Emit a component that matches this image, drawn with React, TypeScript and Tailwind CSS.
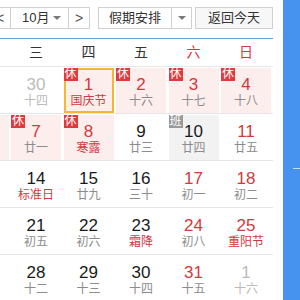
import React from "react";

type Day = {
  d: number;
  l: string;
  other?: boolean;
  red?: boolean;
  lred?: boolean;
  rest?: boolean;
  work?: boolean;
  sel?: boolean;
};

const weeks: Day[][] = [
  [
    { d: 28, l: "十二", other: true },
    { d: 29, l: "十三", other: true },
    { d: 30, l: "十四", other: true },
    { d: 1, l: "国庆节", red: true, lred: true, rest: true, sel: true },
    { d: 2, l: "十六", red: true, rest: true },
    { d: 3, l: "十七", red: true, rest: true },
    { d: 4, l: "十八", red: true, rest: true },
  ],
  [
    { d: 5, l: "十九", red: true, rest: true },
    { d: 6, l: "二十", red: true, rest: true },
    { d: 7, l: "廿一", red: true, rest: true },
    { d: 8, l: "寒露", red: true, lred: true, rest: true },
    { d: 9, l: "廿三" },
    { d: 10, l: "廿四", work: true },
    { d: 11, l: "廿五", red: true },
  ],
  [
    { d: 12, l: "廿六" },
    { d: 13, l: "廿七" },
    { d: 14, l: "标准日", lred: true },
    { d: 15, l: "廿九" },
    { d: 16, l: "三十" },
    { d: 17, l: "初一", red: true },
    { d: 18, l: "初二", red: true },
  ],
  [
    { d: 19, l: "初三" },
    { d: 20, l: "初四" },
    { d: 21, l: "初五" },
    { d: 22, l: "初六" },
    { d: 23, l: "霜降", lred: true },
    { d: 24, l: "初八", red: true },
    { d: 25, l: "重阳节", red: true, lred: true },
  ],
  [
    { d: 26, l: "初十" },
    { d: 27, l: "十一" },
    { d: 28, l: "十二" },
    { d: 29, l: "十三" },
    { d: 30, l: "十四" },
    { d: 31, l: "十五", red: true },
    { d: 1, l: "十六", other: true },
  ],
];

const weekNames = ["一", "二", "三", "四", "五", "六", "日"];

const Arrow = () => (
  <span className="inline-block w-0 h-0 border-l-[4px] border-r-[4px] border-t-[4px] border-l-transparent border-r-transparent border-t-[#7a7a7a]" />
);

function Cell({ day, hidden }: { day: Day; hidden?: boolean }) {
  const bg = day.rest ? "bg-[#fdeeee]" : day.work ? "bg-[#f2f2f2]" : "bg-white";
  const numColor = day.other ? "text-[#bbbbbb]" : day.red ? "text-[#d4383d]" : "text-[#1a1a1a]";
  const lunColor = day.other ? "text-[#bbbbbb]" : day.lred ? "text-[#d4383d]" : "text-[#8c8c8c]";
  return (
    <div className={`relative h-[45px] mt-px ${bg} flex flex-col items-center pt-[7px]`}>
      {day.sel && <div className="absolute inset-0 border-2 border-[#f5b731]" />}
      {!hidden && day.rest && (
        <div className="absolute top-0 left-0 w-[14px] h-[13px] bg-[#e0393e] text-white text-[12px] leading-[13px] flex items-center justify-center">
          休
        </div>
      )}
      {!hidden && day.work && (
        <div className="absolute top-0 left-0 w-[14px] h-[13px] bg-[#9a9a9a] text-white text-[12px] leading-[13px] flex items-center justify-center">
          班
        </div>
      )}
      {!hidden && (
        <>
          <div className={`relative text-[17px] leading-[20px] ${numColor}`}>{day.d}</div>
          <div className={`relative text-[12px] leading-[14px] mt-[-1px] ${lunColor}`}>{day.l}</div>
        </>
      )}
    </div>
  );
}

export default function App() {
  return (
    <div className="w-[300px] h-[300px] overflow-hidden bg-white flex font-['Liberation_Sans','Noto_Sans_CJK_SC',sans-serif]">
      <div className="w-[283px] h-[300px] overflow-hidden shrink-0">
        <div className="-ml-[94px] w-[367px]">
          {/* top bar */}
          <div className="h-[38px] pt-[7px] flex items-start text-[13px] text-[#333]">
            <div className="w-[83px] shrink-0" />
            <div className="w-[22px] h-[22px] border border-[#d0d0d0] bg-white flex items-center justify-center text-[14px] text-[#555] shrink-0">
              &lt;
            </div>
            <div className="w-[59px] h-[22px] -ml-px border border-[#d0d0d0] bg-white flex items-center justify-between pl-[11px] pr-[7px] shrink-0">
              <span>10月</span>
              <Arrow />
            </div>
            <div className="w-[22px] h-[22px] -ml-px border border-[#d0d0d0] bg-white flex items-center justify-center text-[14px] text-[#555] shrink-0">
              &gt;
            </div>
            <div className="w-[94px] h-[22px] ml-[8px] border border-[#d0d0d0] bg-white flex items-center shrink-0">
              <span className="flex-1 pl-[10px]">假期安排</span>
              <span className="w-[20px] h-full border-l border-[#d0d0d0] flex items-center justify-center">
                <Arrow />
              </span>
            </div>
            <div className="w-[78px] h-[22px] ml-[3px] border border-[#d0d0d0] bg-[#f7f7f7] flex items-center justify-center shrink-0">
              返回今天
            </div>
          </div>
          <div className="h-px bg-[#5fa2e8]" />
          {/* header */}
          <div className="h-[27px] grid grid-cols-[repeat(7,50px)] gap-x-[2.5px] items-center text-[14px]">
            {weekNames.map((w, i) => (
              <div key={w} className={`text-center ${i >= 5 ? "text-[#d4383d]" : "text-[#333]"}`}>
                {i >= 2 ? w : ""}
              </div>
            ))}
          </div>
          {weeks.map((wk, i) => (
            <div key={i} className="h-[47px] border-t border-[#e6e6e6] grid grid-cols-[repeat(7,50px)] gap-x-[2.5px] items-start">
              {wk.map((d, j) => (
                <Cell key={j} day={d} hidden={j < 2} />
              ))}
            </div>
          ))}
        </div>
      </div>
      <div className="w-[17px] h-[300px] bg-[#4592ef] shrink-0 flex flex-col">
        <div className="mt-[168px] ml-[10px] h-px bg-white/70" />
      </div>
    </div>
  );
}
